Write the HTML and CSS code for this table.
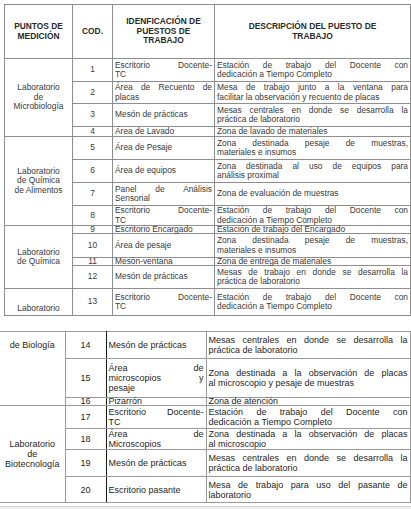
FILE: index.html
```html
<!DOCTYPE html>
<html lang="es">
<head>
<meta charset="utf-8">
<link rel="stylesheet" href="styles.css">
</head>
<body>
<div class="page">
<table class="t1">
<colgroup><col class="c1"><col class="c2"><col class="c3"><col class="c4"></colgroup>
<tr class="head">
<th>PUNTOS DE<br>MEDICIÓN</th>
<th>COD.</th>
<th>IDENFICACIÓN DE<br>PUESTOS DE<br>TRABAJO</th>
<th>DESCRIPCIÓN DEL PUESTO DE<br>TRABAJO</th>
</tr>
<tr class="h23">
<td class="lab" rowspan="4">Laboratorio<br>de<br>Microbiología</td>
<td class="num">1</td>
<td class="txt"><span class="jl">Escritorio Docente-</span>TC</td>
<td class="txt"><span class="jl">Estación de trabajo del Docente con</span>dedicación a Tiempo Completo</td>
</tr>
<tr class="h22">
<td class="num">2</td>
<td class="txt"><span class="jl">Área de Recuento de</span>placas</td>
<td class="txt"><span class="jl">Mesa de trabajo junto a la ventana para</span>facilitar la observación y recuento de placas</td>
</tr>
<tr class="h23">
<td class="num">3</td>
<td class="txt">Mesón de prácticas</td>
<td class="txt"><span class="jl">Mesas centrales en donde se desarrolla la</span>práctica de laboratorio</td>
</tr>
<tr class="h10">
<td class="num">4</td>
<td class="txt">Área de Lavado</td>
<td class="txt">Zona de lavado de materiales</td>
</tr>
<tr class="h23">
<td class="lab" rowspan="4">Laboratorio<br>de Química<br>de Alimentos</td>
<td class="num">5</td>
<td class="txt">Área de Pesaje</td>
<td class="txt"><span class="jl">Zona destinada pesaje de muestras,</span>materiales e insumos</td>
</tr>
<tr class="h23">
<td class="num">6</td>
<td class="txt">Área de equipos</td>
<td class="txt"><span class="jl">Zona destinada al uso de equipos para</span>análisis proximal</td>
</tr>
<tr class="h23">
<td class="num">7</td>
<td class="txt"><span class="jl">Panel de Análisis</span>Sensorial</td>
<td class="txt">Zona de evaluación de muestras</td>
</tr>
<tr class="h20">
<td class="num">8</td>
<td class="txt"><span class="jl">Escritorio Docente-</span>TC</td>
<td class="txt"><span class="jl">Estación de trabajo del Docente con</span>dedicación a Tiempo Completo</td>
</tr>
<tr class="h7">
<td class="lab" rowspan="4">Laboratorio<br>de Química</td>
<td class="num">9</td>
<td class="txt">Escritorio Encargado</td>
<td class="txt">Estación de trabajo del Encargado</td>
</tr>
<tr class="h24">
<td class="num">10</td>
<td class="txt">Área de pesaje</td>
<td class="txt"><span class="jl">Zona destinada pesaje de muestras,</span>materiales e insumos</td>
</tr>
<tr class="h7">
<td class="num">11</td>
<td class="txt">Mesón-ventana</td>
<td class="txt">Zona de entrega de materiales</td>
</tr>
<tr class="h23">
<td class="num">12</td>
<td class="txt">Mesón de prácticas</td>
<td class="txt"><span class="jl">Mesas de trabajo en donde se desarrolla la</span>práctica de laboratorio</td>
</tr>
<tr class="h27">
<td class="lab bottom">Laboratorio</td>
<td class="num">13</td>
<td class="txt"><span class="jl">Escritorio Docente-</span>TC</td>
<td class="txt"><span class="jl">Estación de trabajo del Docente con</span>dedicación a Tiempo Completo</td>
</tr>
</table>

<table class="t2">
<colgroup><col class="d1"><col class="d2"><col class="d3"><col class="d4"></colgroup>
<tr class="k27">
<td class="lab top" rowspan="3">de Biología</td>
<td class="num">14</td>
<td class="txt">Mesón de prácticas</td>
<td class="txt"><span class="jl">Mesas centrales en donde se desarrolla la</span>práctica de laboratorio</td>
</tr>
<tr class="k39">
<td class="num">15</td>
<td class="txt"><span class="jl">Área de</span><span class="jl">microscopios y</span>pesaje</td>
<td class="txt"><span class="jl">Zona destinada a la observación de placas</span>al microscopio y pesaje de muestras</td>
</tr>
<tr class="k7">
<td class="num">16</td>
<td class="txt">Pizarrón</td>
<td class="txt">Zona de atención</td>
</tr>
<tr class="k23">
<td class="lab" rowspan="4">Laboratorio<br>de<br>Biotecnología</td>
<td class="num">17</td>
<td class="txt"><span class="jl">Escritorio Docente-</span>TC</td>
<td class="txt"><span class="jl">Estación de trabajo del Docente con</span>dedicación a Tiempo Completo</td>
</tr>
<tr class="k21">
<td class="num">18</td>
<td class="txt"><span class="jl">Área de</span>Microscopios</td>
<td class="txt"><span class="jl">Zona destinada a la observación de placas</span>al microscopio</td>
</tr>
<tr class="k27">
<td class="num">19</td>
<td class="txt">Mesón de prácticas</td>
<td class="txt"><span class="jl">Mesas centrales en donde se desarrolla la</span>práctica de laboratorio</td>
</tr>
<tr class="k26">
<td class="num">20</td>
<td class="txt">Escritorio pasante</td>
<td class="txt"><span class="jl">Mesa de trabajo para uso del pasante de</span>laboratorio</td>
</tr>
</table>
<div class="band"></div>
</div>
</body>
</html>
```

FILE: styles.css
```css
html, body {
  margin: 0;
  padding: 0;
  background: #ffffff;
}

body {
  width: 411px;
  height: 509px;
  overflow: hidden;
  font-family: "Liberation Sans", Arial, sans-serif;
}

.page {
  display: flex;
  flex-direction: column;
  height: 509px;
}

table {
  border-collapse: collapse;
  table-layout: fixed;
}

td, th {
  padding: 0 2px;
  vertical-align: middle;
}

.jl {
  display: block;
  text-align: justify;
  text-align-last: justify;
}

.num, .lab, th {
  text-align: center;
}

.txt {
  text-align: justify;
}

.lab.bottom {
  vertical-align: bottom;
  padding-bottom: 2px;
}

.lab.top {
  vertical-align: top;
  padding-top: 8px;
}

/* ---------- upper page ---------- */
.t1 {
  margin: 4px 0 0 4px;
  width: 406px;
  font-size: 8.4px;
  line-height: 9.4px;
  color: #3a3a3a;
}

.t1 td, .t1 th {
  border: 1px solid #8e8e8e;
}

.t1 th {
  font-weight: bold;
  color: #2a2a2a;
}

.c1 { width: 68px; }
.c2 { width: 40px; }
.c3 { width: 102px; }
.c4 { width: 196px; }

.t1 .head { height: 54px; }
.t1 .h27 { height: 27px; }
.t1 .h24 { height: 24px; }
.t1 .h23 { height: 23px; }
.t1 .h22 { height: 22px; }
.t1 .h20 { height: 20px; }
.t1 .h10 { height: 10px; }
.t1 .h10 td:not(.lab) { line-height: 9px; }
.t1 .h7 { height: 7px; }
.t1 .h7 td:not(.lab) { line-height: 7px; }

/* ---------- lower page ---------- */
.t2 {
  margin-top: 15px;
  width: 410px;
  font-size: 9px;
  line-height: 10px;
  color: #262626;
}

.t2 td {
  border: 1px solid #9a9a9a;
}

.t2 tr > td:first-child {
  border-left: none;
}

.t2 td.num {
  border-right: 1.5px solid #1a1a1a;
}

.d1 { width: 65px; }
.d2 { width: 41px; }
.d3 { width: 100px; }
.d4 { width: 204px; }

.t2 .k39 { height: 39px; }
.t2 .k27 { height: 27px; }
.t2 .k26 { height: 26px; }
.t2 .k23 { height: 23px; }
.t2 .k21 { height: 21px; }
.t2 .k7 { height: 7px; }
.t2 .k7 td:not(.lab) { line-height: 7px; }

.band {
  flex: 1;
  margin-top: 3px;
  background: #efefef;
  border-top: 1px solid #d2d2d2;
}
```
